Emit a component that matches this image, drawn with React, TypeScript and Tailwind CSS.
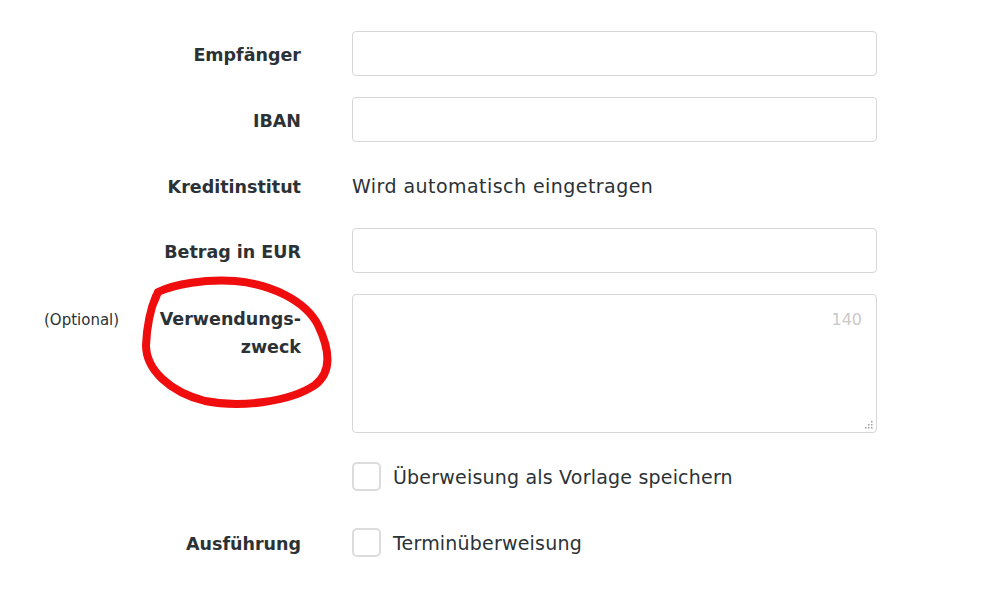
import React from "react";

const font = { fontFamily: '"DejaVu Sans", "Noto Sans", sans-serif' };

function Label({ children }: { children: React.ReactNode }) {
  return (
    <div className="w-[301px] shrink-0 pt-[3px] text-right text-[17.5px] font-bold leading-[28px] text-[#2b3236]">
      {children}
    </div>
  );
}

function Row({ label, children }: { label: React.ReactNode; children: React.ReactNode }) {
  return (
    <div className="flex h-[45px] items-center">
      <Label>{label}</Label>
      <div className="ml-[51px] w-[525px]">{children}</div>
    </div>
  );
}

function Input() {
  return <div className="h-[45px] w-full rounded-[4px] border border-[#d6d6d6] bg-white" />;
}

function Checkbox({ text }: { text: string }) {
  return (
    <div className="flex items-center gap-[12px]">
      <div className="h-[29px] w-[29px] rounded-[5px] border-2 border-[#dcdcdc] bg-white" />
      <span className="pt-[2px] text-[19px] tracking-[0.2px] text-[#2b3236]">{text}</span>
    </div>
  );
}

export default function App() {
  return (
    <div className="relative min-h-[591px] w-[999px] bg-white pt-[31px]" style={font}>
      <div className="flex flex-col">
        <Row label="Empfänger">
          <Input />
        </Row>
        <div className="h-[21px]" />
        <Row label="IBAN">
          <Input />
        </Row>
        <div className="h-[21px]" />
        <Row label="Kreditinstitut">
          <span className="block pt-[2px] text-[19px] tracking-[0.45px] text-[#2b3236]">Wird automatisch eingetragen</span>
        </Row>
        <div className="h-[20px]" />
        <Row label="Betrag in EUR">
          <Input />
        </Row>
        <div className="h-[21px]" />
        <div className="flex h-[139px] items-start">
          <div className="flex w-[301px] shrink-0 items-start justify-between pl-[44px] pt-[12px]">
            <span className="text-[15px] leading-[28px] text-[#2b3236]">(Optional)</span>
            <span className="-mt-[1px] text-right text-[17.5px] font-bold leading-[28px] text-[#2b3236]">
              Verwendungs-
              <br />
              zweck
            </span>
          </div>
          <div className="relative ml-[51px] h-[139px] w-[525px] rounded-[4px] border border-[#d6d6d6] bg-white">
            <span className="absolute right-[14px] top-[13px] text-[16px] text-[#c9c9c9]">140</span>
            <svg className="absolute bottom-[3px] right-[3px]" width="8" height="8" viewBox="0 0 8 8">
              <g fill="#9a9a9a">
                <rect x="6" y="0" width="1.5" height="1.5" />
                <rect x="3" y="3" width="1.5" height="1.5" />
                <rect x="6" y="3" width="1.5" height="1.5" />
                <rect x="0" y="6" width="1.5" height="1.5" />
                <rect x="3" y="6" width="1.5" height="1.5" />
                <rect x="6" y="6" width="1.5" height="1.5" />
              </g>
            </svg>
          </div>
        </div>
        <div className="h-[21px]" />
        <Row label="">
          <Checkbox text="Überweisung als Vorlage speichern" />
        </Row>
        <div className="h-[21px]" />
        <Row label="Ausführung">
          <Checkbox text="Terminüberweisung" />
        </Row>
      </div>
      <svg
        className="pointer-events-none absolute left-0 top-0"
        width="999"
        height="591"
        viewBox="0 0 999 591"
      >
        <path
          d="M156 296 C 150 310, 147 325, 146 345 C 146 370, 170 392, 205 401 C 240 408, 290 402, 315 385 C 332 372, 330 350, 318 325 C 305 300, 270 284, 235 281 C 205 279, 175 284, 158 292 L 154 302"
          fill="none"
          stroke="#f00d0d"
          strokeWidth="8"
          strokeLinecap="round"
          strokeLinejoin="round"
        />
      </svg>
    </div>
  );
}
